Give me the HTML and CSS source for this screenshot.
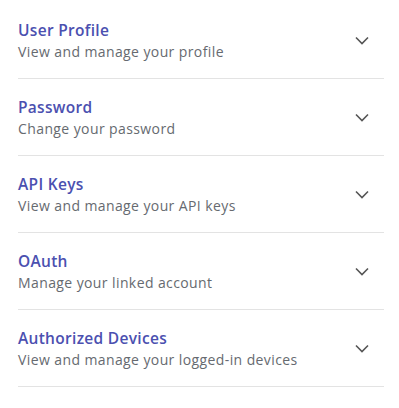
FILE: index.html
```html
<!DOCTYPE html>
<html>
<head>
<meta charset="utf-8">
<link rel="stylesheet" href="styles.css">
</head>
<body>
<div class="list">
  <div class="item">
    <div class="text">
      <div class="title">User Profile</div>
      <div class="sub">View and manage your profile</div>
    </div>
    <svg class="chev" width="16" height="16" viewBox="0 0 16 16"><path d="M2 5.5l6 6 6-6" fill="none" stroke="#555" stroke-width="1.6"/></svg>
  </div>
  <div class="item">
    <div class="text">
      <div class="title">Password</div>
      <div class="sub">Change your password</div>
    </div>
    <svg class="chev" width="16" height="16" viewBox="0 0 16 16"><path d="M2 5.5l6 6 6-6" fill="none" stroke="#555" stroke-width="1.6"/></svg>
  </div>
  <div class="item">
    <div class="text">
      <div class="title">API Keys</div>
      <div class="sub">View and manage your API keys</div>
    </div>
    <svg class="chev" width="16" height="16" viewBox="0 0 16 16"><path d="M2 5.5l6 6 6-6" fill="none" stroke="#555" stroke-width="1.6"/></svg>
  </div>
  <div class="item">
    <div class="text">
      <div class="title">OAuth</div>
      <div class="sub">Manage your linked account</div>
    </div>
    <svg class="chev" width="16" height="16" viewBox="0 0 16 16"><path d="M2 5.5l6 6 6-6" fill="none" stroke="#555" stroke-width="1.6"/></svg>
  </div>
  <div class="item">
    <div class="text">
      <div class="title">Authorized Devices</div>
      <div class="sub">View and manage your logged-in devices</div>
    </div>
    <svg class="chev" width="16" height="16" viewBox="0 0 16 16"><path d="M2 5.5l6 6 6-6" fill="none" stroke="#555" stroke-width="1.6"/></svg>
  </div>
</div>
</body>
</html>
```
FILE: styles.css
```css
html, body { margin: 0; padding: 0; background: #fff; }
body { font-family: "Open Sans", "Noto Sans", sans-serif; }
.list { padding: 2px 15px 0 18px; }
.item {
  display: flex;
  align-items: center;
  justify-content: space-between;
  height: 76px;
  border-bottom: 1px solid #e3e3e3;
  box-sizing: content-box;
}
.text { display: flex; flex-direction: column; gap: 2px; padding-top: 1px; }
.title { font-size: 15.5px; font-weight: 600; color: #4b50b0; line-height: 20px; letter-spacing: 0.3px; }
.sub { font-size: 14px; color: #666a70; line-height: 20px; letter-spacing: 0.4px; }
.chev { margin-right: 14px; display: block; }
```
